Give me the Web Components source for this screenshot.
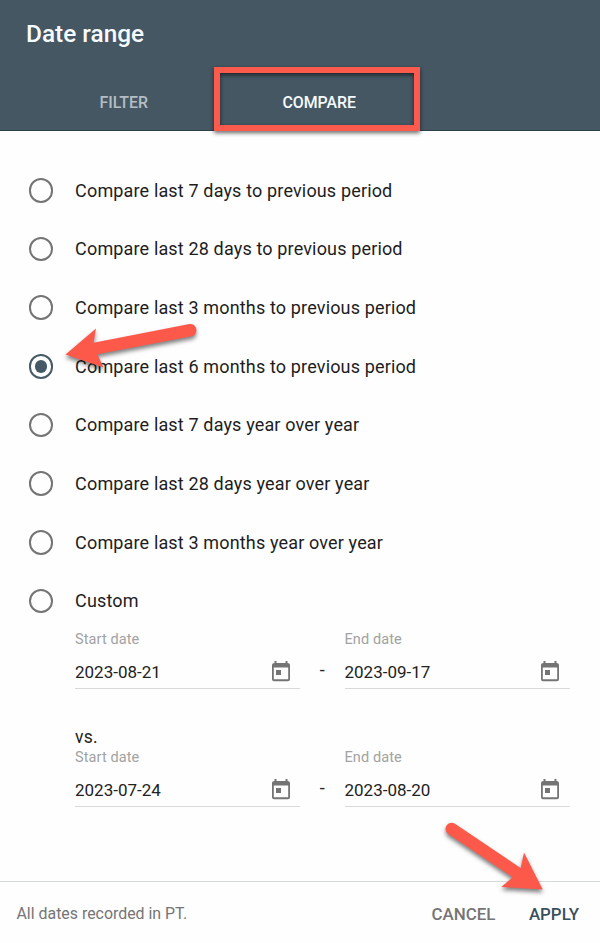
<!DOCTYPE html>
<html lang="en">
<head>
<meta charset="utf-8">
<title>Date range</title>
<style>
  body {
    margin: 0;
    background: #fefefe;
    font-family: Roboto, "Liberation Sans", sans-serif;
  }
</style>
</head>
<body>
<date-range-dialog></date-range-dialog>

<script>
{
  const define = (name, html) => {
    const template = document.createElement("template");
    template.innerHTML = html;

    window.customElements.define(name, class extends HTMLElement {
      constructor () {
        super();
        this.attachShadow({ mode: "open" });
        this.shadowRoot.appendChild(template.content.cloneNode(true));
      }
    });
  };

  define("dialog-tab", `
    <style>
      :host {
        display: flex;
        align-items: center;
        justify-content: center;
        position: relative;
        width: 195.5px;
        height: 56px;
        color: #b4bdc3;
        font-size: 15.9px;
        font-weight: 500;
        line-height: 20px;
        cursor: pointer;
      }

      :host([active]) {
        color: #f5fbff;
      }
    </style>
    <slot></slot>
    <slot name="overlay"></slot>
  `);

  define("highlight-box", `
    <style>
      :host {
        display: block;
        position: absolute;
        box-sizing: border-box;
        top: -8px;
        left: -8px;
        width: 206px;
        height: 64px;
        border: 6px solid #fb5a4c;
        filter: drop-shadow(0 2px 2px rgba(0, 0, 0, 0.6));
        pointer-events: none;
      }
    </style>
  `);

  define("arrow-mark", `
    <style>
      :host {
        display: block;
        position: absolute;
        pointer-events: none;
      }

      ::slotted(svg) {
        display: block;
        overflow: visible;
        fill: #fd594b;
        filter: drop-shadow(0 3px 2px rgba(0, 0, 0, 0.5));
      }
    </style>
    <slot></slot>
  `);

  define("radio-option", `
    <style>
      :host {
        display: flex;
        align-items: center;
        gap: 22px;
        position: relative;
        height: 58.7px;
        padding-left: 28.5px;
        color: #1d1d1d;
        font-size: 18px;
        line-height: 24px;
        letter-spacing: 0.15px;
        cursor: pointer;
      }

      .circle {
        box-sizing: border-box;
        display: flex;
        align-items: center;
        justify-content: center;
        flex: none;
        width: 24.6px;
        height: 24.6px;
        border: 2.4px solid #747474;
        border-radius: 50%;
      }

      :host([checked]) .circle {
        border-color: #455a66;
      }

      :host([checked]) .circle::after {
        content: "";
        width: 12.4px;
        height: 12.4px;
        border-radius: 50%;
        background: #455a66;
      }

      span {
        padding-top: 0.4px;
      }
    </style>
    <div class="circle"></div>
    <span><slot></slot></span>
    <slot name="overlay"></slot>
  `);

  define("date-field", `
    <style>
      :host {
        display: block;
        width: 225px;
      }

      .label {
        padding-top: 1px;
        color: #a2a2a2;
        font-size: 14.5px;
        line-height: 18px;
        letter-spacing: 0.1px;
      }

      .value {
        display: flex;
        align-items: center;
        justify-content: space-between;
        box-sizing: border-box;
        height: 40px;
        padding: 7px 9.5px 0 0;
        border-bottom: 1px solid #d9d9d9;
        color: #222;
        font-size: 17px;
        line-height: 20px;
      }

      svg {
        width: 20px;
        height: 22px;
        margin-top: -1px;
        fill: #747474;
      }
    </style>
    <div class="label"><slot name="label"></slot></div>
    <div class="value">
      <slot></slot>
      <svg viewBox="2 0 20 22">
        <path fill-rule="evenodd" d="M5.500 1h2v2h9V1h2v2c1.500 0 2.500.8 2.500 2v14.200c0 1.100-.9 2-2 2H5c-1.100 0-2-.9-2-2V5c0-1.200 1-2 2.500-2zM4.800 7.500v11.800h14.400V7.500z"/>
        <path d="M7 10h5v5H7z"/>
      </svg>
    </div>
  `);

  define("date-pair", `
    <style>
      :host {
        display: flex;
        padding-left: 75px;
      }

      .dash {
        width: 44.5px;
        padding-top: 30px;
        color: #222;
        font-size: 18px;
        line-height: 20px;
        text-align: center;
      }
    </style>
    <slot name="start"></slot>
    <div class="dash">-</div>
    <slot name="end"></slot>
  `);

  define("date-range-dialog", `
    <style>
      :host {
        display: flex;
        flex-direction: column;
        box-sizing: border-box;
        width: 600px;
        height: 943px;
        overflow: hidden;
      }

      header {
        box-sizing: border-box;
        height: 131px;
        background: #455763;
        border-bottom: 1px solid #2c404c;
      }

      h1 {
        margin: 0;
        padding: 20px 0 0 26px;
        color: #f5fbff;
        font-size: 24.4px;
        font-weight: 500;
        line-height: 28px;
      }

      nav {
        display: flex;
        padding: 27px 0 0 26px;
      }

      main {
        flex: 1;
        padding-top: 30px;
      }

      date-pair {
        margin-top: -1px;
      }

      .vs {
        padding: 37px 0 1px 75px;
        color: #222;
        font-size: 17.5px;
        line-height: 22px;
        letter-spacing: 0.3px;
      }

      footer {
        display: flex;
        align-items: center;
        position: relative;
        box-sizing: border-box;
        height: 62px;
        padding: 3px 21px 0 16.5px;
        border-top: 1px solid #d6d9d9;
        color: #757575;
        line-height: 20px;
      }

      .note {
        flex: 1;
        font-size: 15.9px;
      }

      .cancel,
      .apply {
        font-size: 16.9px;
        font-weight: 500;
      }

      .apply {
        margin-left: 33.5px;
        color: #3a4f5c;
      }

      .to-option {
        top: -7.7px;
        left: 60px;
      }

      .to-apply {
        top: -66px;
        left: 440px;
      }
    </style>

    <header>
      <h1>Date range</h1>
      <nav>
        <dialog-tab>FILTER</dialog-tab>
        <dialog-tab active>COMPARE<highlight-box slot="overlay"></highlight-box></dialog-tab>
      </nav>
    </header>

    <main>
      <radio-option>Compare last 7 days to previous period</radio-option>
      <radio-option>Compare last 28 days to previous period</radio-option>
      <radio-option>Compare last 3 months to previous period</radio-option>
      <radio-option checked>Compare last 6 months to previous period<arrow-mark slot="overlay" class="to-option">
        <svg width="140" height="52" viewBox="60 329 140 52">
          <path d="M65.5 354.5L96 328.5L93.5 342.7L189.5 324.1C197.5 323 199 334.8 191.7 336.3L97.3 354.3L103.5 367.5Z"/>
        </svg>
      </arrow-mark></radio-option>
      <radio-option>Compare last 7 days year over year</radio-option>
      <radio-option>Compare last 28 days year over year</radio-option>
      <radio-option>Compare last 3 months year over year</radio-option>
      <radio-option>Custom</radio-option>

      <date-pair>
        <date-field slot="start"><span slot="label">Start date</span>2023-08-21</date-field>
        <date-field slot="end"><span slot="label">End date</span>2023-09-17</date-field>
      </date-pair>
      <div class="vs">vs.</div>
      <date-pair>
        <date-field slot="start"><span slot="label">Start date</span>2023-07-24</date-field>
        <date-field slot="end"><span slot="label">End date</span>2023-08-20</date-field>
      </date-pair>
    </main>

    <footer>
      <span class="note">All dates recorded in PT.</span>
      <span class="cancel">CANCEL</span>
      <span class="apply">APPLY</span>
      <arrow-mark class="to-apply">
        <svg width="110" height="76" viewBox="440 816 110 76">
          <path d="M542.7 889.4L524 852.5L520.7 868L455 823.7C448.5 819.5 441.5 828.8 448.3 834L512.7 877.3L501.3 887Z"/>
        </svg>
      </arrow-mark>
    </footer>
  `);
}
</script>
</body>
</html>
